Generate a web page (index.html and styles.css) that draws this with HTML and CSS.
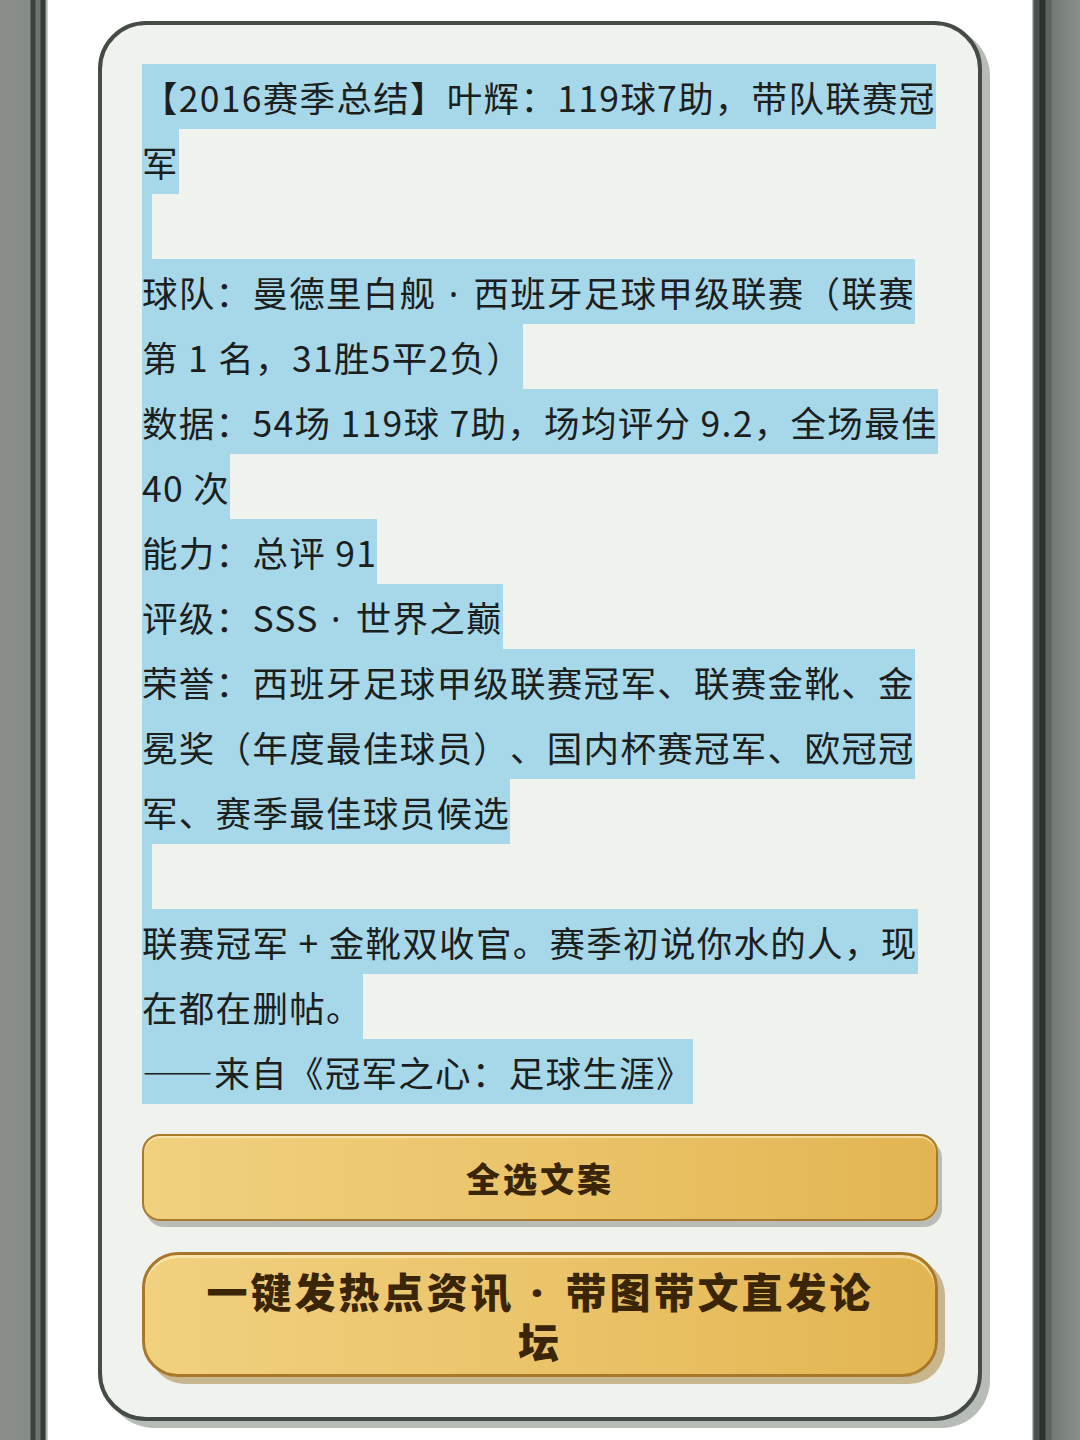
FILE: index.html
```html
<!DOCTYPE html>
<html lang="zh-CN">
<head>
<meta charset="utf-8">
<title>赛季总结</title>
<link rel="stylesheet" href="styles.css">
</head>
<body>
<div class="page">
  <div class="rail rail-left"></div>
  <main class="center">
    <section class="card">
      <div class="text">
        <div class="line"><span class="sel">【2016赛季总结】叶辉：119球7助，带队联赛冠</span></div>
        <div class="line"><span class="sel">军</span></div>
        <div class="line"><span class="sel nl"></span></div>
        <div class="line"><span class="sel">球队：曼德里白舰<span class="dot"> · </span>西班牙足球甲级联赛（联赛</span></div>
        <div class="line"><span class="sel">第 1 名，31胜5平2负）</span></div>
        <div class="line"><span class="sel">数据：54场 119球 7助，场均评分 9.2，全场最佳</span></div>
        <div class="line"><span class="sel">40 次</span></div>
        <div class="line"><span class="sel">能力：总评 91</span></div>
        <div class="line"><span class="sel">评级：SSS<span class="dot"> · </span>世界之巅</span></div>
        <div class="line"><span class="sel">荣誉：西班牙足球甲级联赛冠军、联赛金靴、金</span></div>
        <div class="line"><span class="sel">冕奖（年度最佳球员）、国内杯赛冠军、欧冠冠</span></div>
        <div class="line"><span class="sel">军、赛季最佳球员候选</span></div>
        <div class="line"><span class="sel nl"></span></div>
        <div class="line"><span class="sel">联赛冠军 + 金靴双收官。赛季初说你水的人，现</span></div>
        <div class="line"><span class="sel">在都在删帖。</span></div>
        <div class="line"><span class="sel">——来自《冠军之心：足球生涯》</span></div>
      </div>
      <button class="btn btn-small" type="button">全选文案</button>
      <button class="btn btn-large" type="button">一键发热点资讯<span class="dot"> · </span>带图带文直发论<br>坛</button>
    </section>
  </main>
  <div class="rail rail-right"></div>
</div>
</body>
</html>
```

FILE: styles.css
```css
html, body {
  margin: 0;
  padding: 0;
  background: #ffffff;
}

body {
  font-family: "Noto Sans CJK SC", "Noto Sans", sans-serif;
}

.page {
  display: flex;
  width: 1080px;
  height: 1440px;
  overflow: hidden;
}

.rail {
  width: 48px;
  flex: 0 0 48px;
}

.rail-left {
  background: linear-gradient(90deg,
    #8a8f89 0px, #878c86 30px,
    #3b413c 31px, #3b413c 35px,
    #6e746e 36px, #6e746e 40px,
    #353c36 41px, #353c36 45px,
    #a3a8a2 46px, #d8dbd7 48px);
}

.rail-right {
  background: linear-gradient(90deg,
    #d5d8d4 0px, #a0a59f 1px,
    #4b514c 2px, #4b514c 7px,
    #2c322d 8px, #2c322d 13px,
    #5e645e 14px, #5e645e 19px,
    #737973 20px, #8a8f89 48px);
}

.center {
  flex: 1;
  background: #ffffff;
  padding: 21px 50px 0 50px;
}

.card {
  box-sizing: border-box;
  width: 884px;
  height: 1400px;
  background: #eff2ed;
  border: 4px solid #454c46;
  border-radius: 48px;
  box-shadow: 8px 7px 0 #b7bcb6;
  padding: 39px 40px 39px 40px;
  display: flex;
  flex-direction: column;
}

.text {
  color: #1b201d;
  font-size: 35.5px;
  letter-spacing: 1.3px;
  margin-bottom: 30px;
  text-spacing-trim: space-all;
}

.line {
  height: 65px;
  line-height: 65px;
  white-space: nowrap;
}

.sel {
  display: inline-block;
  height: 65px;
  background: #a7d8ea;
  vertical-align: top;
}

.sel.nl {
  width: 10px;
}

.dot {
  font-family: "Noto Sans", "Liberation Sans", sans-serif;
  white-space: pre;
}

.text .dot {
  letter-spacing: 3px;
}

.btn {
  display: block;
  box-sizing: border-box;
  width: 796px;
  font-family: "Noto Sans CJK SC", "Noto Sans", sans-serif;
  color: #3a2606;
  font-weight: 900;
  text-align: center;
  background: linear-gradient(90deg, #f1d07f 0%, #ebc46a 50%, #e2b552 100%);
  padding: 0;
  cursor: pointer;
  text-spacing-trim: space-all;
}

.btn-small {
  height: 87px;
  border: 2px solid #a9792c;
  border-radius: 18px;
  box-shadow: 4px 6px 0 #b9bdb5, inset 0 2px 0 rgba(255, 246, 214, 0.55);
  font-size: 34px;
  letter-spacing: 3px;
  margin-bottom: 31px;
}

.btn-large {
  height: 125px;
  border: 3px solid #a8772a;
  border-radius: 36px;
  box-shadow: 7px 7px 0 #c8b68e, inset 0 3px 0 rgba(255, 246, 214, 0.55);
  font-size: 41px;
  line-height: 48px;
  letter-spacing: 3px;
}

.btn-large .dot {
  letter-spacing: 6px;
}
```
